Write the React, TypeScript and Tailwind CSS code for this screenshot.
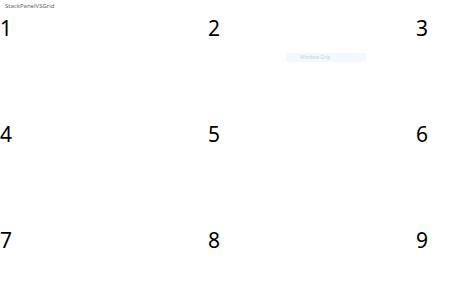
export default function App() {
  const nums = ["1", "2", "3", "4", "5", "6", "7", "8", "9"];
  return (
    <div className="w-[466px] h-[292px] overflow-hidden bg-white relative" style={{ fontFamily: '"Noto Sans", "Open Sans", sans-serif' }}>
      <div className="pl-[5px] pt-[2px] h-[18px] text-[6px] leading-[9px] text-[#666]">StackPanelVSGrid</div>
      <div className="grid grid-cols-[208px_208px_208px] auto-rows-[106px]">
        {nums.map((n) => (
          <div key={n} className="text-[21px] leading-none text-black">
            {n}
          </div>
        ))}
      </div>
      <div className="absolute left-[286px] top-[53px] w-[80px] h-[9px] bg-[#f2f8fd] text-[5px] leading-[9px] pl-[14px] text-[#c5d2de]">
        Window Grip
      </div>
    </div>
  );
}
